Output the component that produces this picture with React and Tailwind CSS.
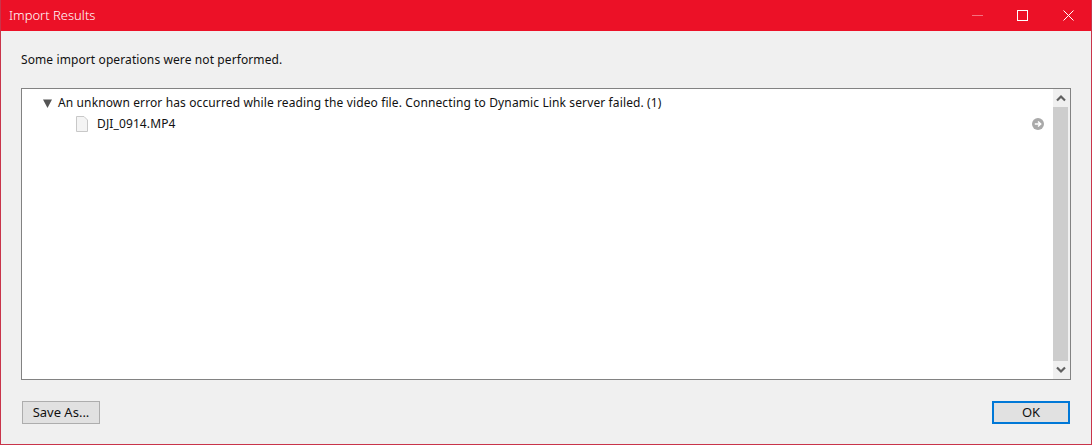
const font = { fontFamily: '"Noto Sans", sans-serif' }

function ScrollArrow({ up }) {
  return (
    <div className="h-[18px] flex items-center justify-center pr-px">
      <svg width="10" height="8" viewBox="0 0 10 8">
        <path d={up ? 'M1 6.5 L5 2.5 L9 6.5' : 'M1 1.5 L5 5.5 L9 1.5'} fill="none" stroke="#606060" strokeWidth="2.2" />
      </svg>
    </div>
  )
}

export default function App() {
  return (
    <div className="w-[1092px] h-[445px] flex flex-col bg-[#f0f0f0] border border-[#c9344a] border-t-0 text-[#111] overflow-hidden" style={font}>
      {/* Title bar */}
      <div className="h-[31px] shrink-0 bg-[#ec1127] flex items-center text-white -mx-px">
        <span className="pl-[9px] text-[13px] leading-none font-light">Import Results</span>
        <div className="ml-auto flex items-center pr-[18px]">
          <svg width="11" height="11" viewBox="0 0 11 11" className="mr-[34px]">
            <path d="M0 5.5 H11" stroke="#f5707f" />
          </svg>
          <svg width="11" height="11" viewBox="0 0 11 11" className="mr-[35px]">
            <rect x="0.5" y="0.5" width="10" height="10" fill="none" stroke="#fff" />
          </svg>
          <svg width="11" height="11" viewBox="0 0 11 11">
            <path d="M0.5 0.5 L10.5 10.5 M10.5 0.5 L0.5 10.5" stroke="#fff" />
          </svg>
        </div>
      </div>

      <div className="flex-1 flex flex-col pl-5 pr-5">
        <p className="mt-[20px] text-xs leading-[17px] tracking-[0.1px]">Some import operations were not performed.</p>

        {/* Results list */}
        <div className="mt-[20px] h-[292px] bg-white border border-[#828282] flex">
          <div className="flex-1 text-xs tracking-[0.12px] pt-[5px]">
            <div className="flex items-center h-[18px]">
              <svg width="9" height="9" viewBox="0 0 9 9" className="ml-[21px] mr-[6px]">
                <path d="M0 0.5 H9 L4.5 9 Z" fill="#555" />
              </svg>
              <span>An unknown error has occurred while reading the video file. Connecting to Dynamic Link server failed. (1)</span>
            </div>
            <div className="flex items-center h-[20px] mt-[2px]">
              <svg width="12" height="16" viewBox="0 0 12 16" className="ml-[54px] mr-[9px]">
                <path d="M0.5 0.5 H8 L11.5 4 V15.5 H0.5 Z" fill="#f4f4f4" stroke="#c8c8c8" />
              </svg>
              <span>DJI_0914.MP4</span>
              <svg width="12" height="12" viewBox="0 0 12 12" className="ml-auto mr-[9px]">
                <circle cx="6" cy="6" r="6" fill="#a9a9a9" />
                <path d="M2.8 6 H8.5 M6 3.5 L8.7 6 L6 8.5" fill="none" stroke="#fff" strokeWidth="1.5" />
              </svg>
            </div>
          </div>
          <div className="w-[17px] bg-[#f0f0f0] flex flex-col">
            <ScrollArrow up />
            <div className="flex-1 bg-[#cdcdcd] mr-[2px]" />
            <ScrollArrow />
          </div>
        </div>

        {/* Footer buttons */}
        <div className="mt-[21px] flex justify-between px-px text-[13px]">
          <button className="w-[78px] h-[23px] bg-[#e1e1e1] border border-[#adadad]">Save As...</button>
          <button className="w-[78px] h-[23px] bg-[#e1e1e1] border-2 border-[#0078d7]">OK</button>
        </div>
      </div>
    </div>
  )
}
